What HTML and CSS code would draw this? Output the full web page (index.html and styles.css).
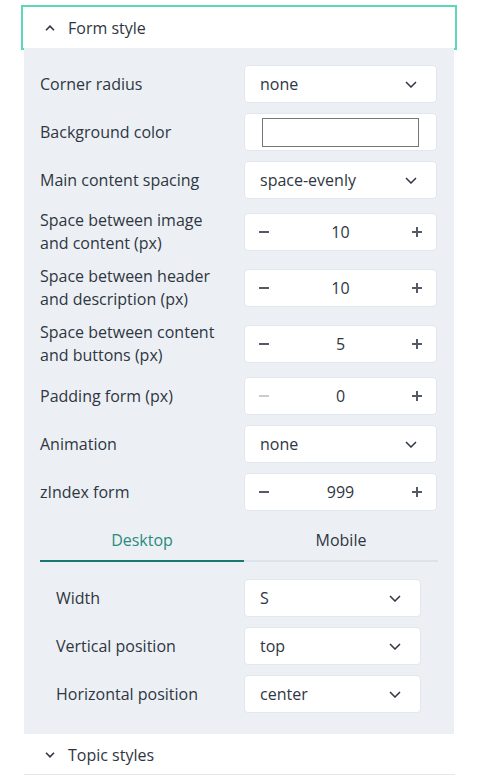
FILE: index.html
```html
<!DOCTYPE html>
<html>
<head>
<meta charset="utf-8">
<link rel="stylesheet" href="styles.css">
</head>
<body>
<div class="wrap">
  <div class="acc-head">
    <svg class="chev" width="10" height="6" viewBox="0 0 10 6"><path d="M1 5.2 L5 1.2 L9 5.2" fill="none" stroke="#2f3642" stroke-width="1.6"/></svg>
    <span>Form style</span>
  </div>
  <div class="panel">
    <div class="rows">
      <div class="row"><div class="label">Corner radius</div>
        <div class="ctl select"><span>none</span><svg width="12" height="7" viewBox="0 0 12 7"><path d="M1 1 L6 6 L11 1" fill="none" stroke="#2f3642" stroke-width="1.5"/></svg></div></div>
      <div class="row"><div class="label">Background color</div>
        <div class="ctl color"><div class="swatch"></div></div></div>
      <div class="row"><div class="label">Main content spacing</div>
        <div class="ctl select"><span>space-evenly</span><svg width="12" height="7" viewBox="0 0 12 7"><path d="M1 1 L6 6 L11 1" fill="none" stroke="#2f3642" stroke-width="1.5"/></svg></div></div>
      <div class="row two"><div class="label">Space between image<br>and content (px)</div>
        <div class="ctl step"><span class="minus"></span><span class="num">10</span><span class="plus"></span></div></div>
      <div class="row two"><div class="label">Space between header<br>and description (px)</div>
        <div class="ctl step"><span class="minus"></span><span class="num">10</span><span class="plus"></span></div></div>
      <div class="row two"><div class="label">Space between content<br>and buttons (px)</div>
        <div class="ctl step"><span class="minus"></span><span class="num">5</span><span class="plus"></span></div></div>
      <div class="row"><div class="label">Padding form (px)</div>
        <div class="ctl step"><span class="minus off"></span><span class="num">0</span><span class="plus"></span></div></div>
      <div class="row"><div class="label">Animation</div>
        <div class="ctl select"><span>none</span><svg width="12" height="7" viewBox="0 0 12 7"><path d="M1 1 L6 6 L11 1" fill="none" stroke="#2f3642" stroke-width="1.5"/></svg></div></div>
      <div class="row"><div class="label">zIndex form</div>
        <div class="ctl step"><span class="minus"></span><span class="num">999</span><span class="plus"></span></div></div>
    </div>
    <div class="tabs">
      <div class="tab active">Desktop</div>
      <div class="tab">Mobile</div>
    </div>
    <div class="rows sub">
      <div class="row"><div class="label">Width</div>
        <div class="ctl select"><span>S</span><svg width="12" height="7" viewBox="0 0 12 7"><path d="M1 1 L6 6 L11 1" fill="none" stroke="#2f3642" stroke-width="1.5"/></svg></div></div>
      <div class="row"><div class="label">Vertical position</div>
        <div class="ctl select"><span>top</span><svg width="12" height="7" viewBox="0 0 12 7"><path d="M1 1 L6 6 L11 1" fill="none" stroke="#2f3642" stroke-width="1.5"/></svg></div></div>
      <div class="row"><div class="label">Horizontal position</div>
        <div class="ctl select"><span>center</span><svg width="12" height="7" viewBox="0 0 12 7"><path d="M1 1 L6 6 L11 1" fill="none" stroke="#2f3642" stroke-width="1.5"/></svg></div></div>
    </div>
  </div>
  <div class="acc-item">
    <svg class="chev" width="10" height="6" viewBox="0 0 10 6"><path d="M1 0.8 L5 4.8 L9 0.8" fill="none" stroke="#2f3642" stroke-width="1.6"/></svg>
    <span>Topic styles</span>
  </div>
</div>
</body>
</html>
```
FILE: styles.css
```css
* { box-sizing: border-box; }
html, body { margin: 0; padding: 0; background: #ffffff; }
body {
  font-family: "Open Sans", "Noto Sans", sans-serif;
  font-size: 16px;
  color: #2f3642;
}
.wrap {
  margin-left: 21px;
  padding-top: 5px;
  width: 436px;
}
.acc-head {
  height: 45px;
  border: 2px solid #5dd6b9;
  display: flex;
  align-items: center;
  padding-left: 22px;
  padding-top: 1px;
}
.chev { margin-right: 13px; }
.panel {
  position: relative;
  margin: -2px 3px 0;
  background: #ecf0f4;
  padding: 17px 17px 21px 16px;
}
.rows {
  display: flex;
  flex-direction: column;
  gap: 10px;
}
.row {
  display: grid;
  grid-template-columns: 1fr 193px;
  align-items: center;
  min-height: 38px;
}
.row.two { min-height: 46px; }
.label { line-height: 23px; }
.ctl {
  height: 38px;
  background: #ffffff;
  border: 1px solid #e1e7ee;
  border-radius: 4px;
  display: flex;
  align-items: center;
}
.select {
  justify-content: space-between;
  padding: 0 19px 0 15px;
}
.color {
  justify-content: center;
}
.swatch {
  width: 157px;
  height: 29px;
  border: 1px solid #767676;
  background: #fff;
}
.step {
  justify-content: space-between;
  padding: 0 13px 0 13px;
}
.num { flex: 1; text-align: center; }
.minus, .plus {
  position: relative;
  width: 12px;
  height: 12px;
}
.minus::before, .plus::before, .plus::after {
  content: "";
  position: absolute;
  background: #555b64;
}
.minus::before, .plus::before {
  left: 1px; right: 1px; top: 5px; height: 1.5px;
}
.plus::after {
  top: 1px; bottom: 1px; left: 5.25px; width: 1.5px;
}
.minus.off::before { background: #c9cccf; }
.tabs {
  display: grid;
  grid-template-columns: 204px 1fr;
  margin-top: 10px;
  margin-right: -1px;
}
.tab {
  text-align: center;
  line-height: 23px;
  padding: 8px 0;
  border-bottom: 2px solid #dde3ea;
}
.tab.active {
  color: #2a8a80;
  border-bottom-color: #18776f;
}
.sub {
  margin-top: 17px;
  padding: 0 16px;
}
.sub .row { grid-template-columns: 1fr 177px; }
.acc-item {
  margin: 0 2px 0 3px;
  height: 41px;
  border-bottom: 1px solid #e3e8ed;
  display: flex;
  align-items: center;
  padding-left: 21px;
  padding-top: 1px;
}
```
